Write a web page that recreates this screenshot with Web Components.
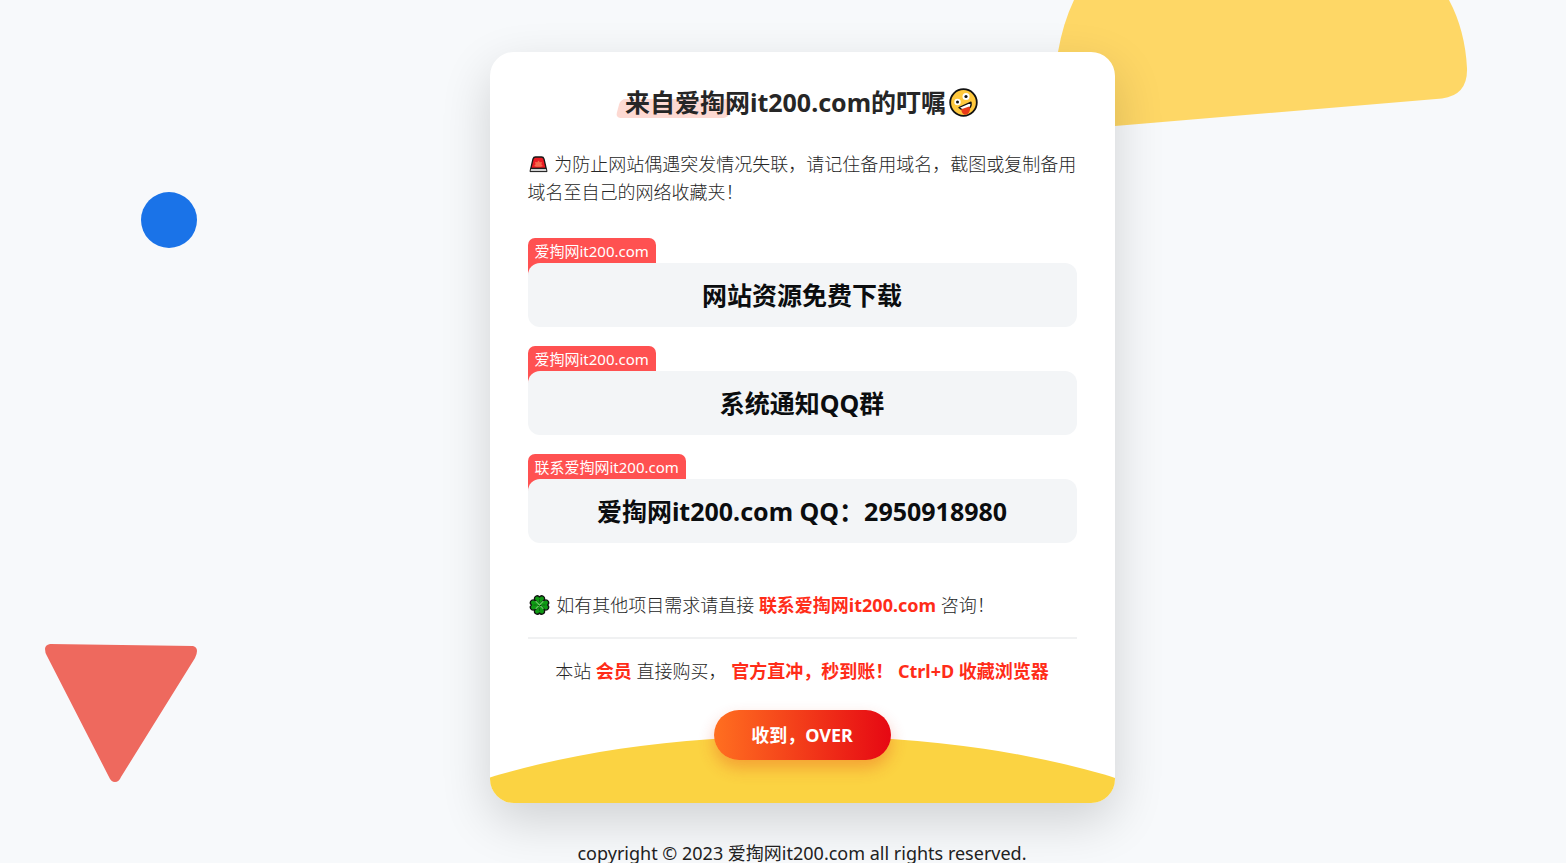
<!DOCTYPE html>
<html lang="zh-CN">
<head>
<meta charset="utf-8">
<meta name="viewport" content="width=device-width, initial-scale=1">
<title>爱掏网it200.com</title>
<style>
  body {
    margin: 0;
    background: #f7f9fb;
    color: #262626;
    font-family: "Noto Sans", "Noto Sans CJK SC", sans-serif;
    font-size: 18px;
    line-height: 28px;
  }
</style>
</head>
<body>
<notice-page>
  <notice-card>
    <notice-title slot="title">来自爱掏网it200.com的叮嘱</notice-title>
    <notice-text slot="intro" icon="alarm">为防止网站偶遇突发情况失联，请记住备用域名，截图或复制备用域名至自己的网络收藏夹！</notice-text>
    <link-item label="爱掏网it200.com">网站资源免费下载</link-item>
    <link-item label="爱掏网it200.com">系统通知QQ群</link-item>
    <link-item label="联系爱掏网it200.com">爱掏网it200.com QQ：2950918980</link-item>
    <notice-text slot="contact" icon="clover">如有其他项目需求请直接 <hot-link>联系爱掏网it200.com</hot-link> 咨询！</notice-text>
    <notice-text slot="member" centered>本站 <hot-link>会员</hot-link> 直接购买， <hot-link>官方直冲，秒到账！</hot-link> <hot-link>Ctrl+D 收藏浏览器</hot-link></notice-text>
    <confirm-button slot="action">收到，OVER</confirm-button>
  </notice-card>
  <span slot="footer">copyright © 2023 爱掏网it200.com all rights reserved.</span>
</notice-page>

<script>
const icons = {
  alarm: `
    <svg width="22" height="20" viewBox="0 0 22 20" aria-hidden="true">
      <path d="M5 4Q5.6 2 7.5 2H13.500Q15.400 2 16 4L18.2 13.500H2.800Z" fill="#ec1c24" stroke="#161616" stroke-width="1.3"/>
      <path d="M10.500 5.500l1.300 1.700 2.200-.2-.6 2.200 1.400 1.800-2 .8H8.200l-2-.8 1.400-1.800L7 7l2.200.2Z" fill="#f4694c"/>
      <path d="M2.600 13.400H18.400L19 16.600H2Z" fill="#d2d2d2" stroke="#161616" stroke-width="1"/>
    </svg>`,
  clover: `
    <svg width="24" height="22" viewBox="0 0 24 22" aria-hidden="true">
      <g fill="#0f9a14" stroke="#111" stroke-width="1.3" stroke-linejoin="round">
        <path id="leaf" d="M11.500 11L7 7Q5.500 3.500 7.800 2.200Q10 1 11.500 3Q13 1 15.200 2.200Q17.500 3.500 16 7Z"/>
        <use href="#leaf" transform="rotate(90 11.500 11)"/>
        <use href="#leaf" transform="rotate(180 11.500 11)"/>
        <use href="#leaf" transform="rotate(270 11.500 11)"/>
      </g>
      <path d="M8 7.500L15 14.500M15 7.500L8 14.500" stroke="#5fd05a" stroke-width="1.400" stroke-linecap="round"/>
      <path d="M11.500 5V8M11.500 14V17M5.500 11H8.500M14.500 11H17.500" stroke="#0a6b0e" stroke-width="1"/>
    </svg>`,
  zany: `
    <svg width="31" height="31" viewBox="0 0 31 31" aria-hidden="true">
      <circle cx="15.5" cy="15.5" r="13.3" fill="#ffc83d" stroke="#111" stroke-width="1.8"/>
      <circle cx="9.500" cy="15" r="3.2" fill="#fff"/>
      <circle cx="18" cy="9.5" r="3.5" fill="#fff"/>
      <circle cx="9.500" cy="15" r="1.500" fill="#111"/>
      <circle cx="18" cy="9.5" r="1.600" fill="#111"/>
      <path d="M11 20.500L23 15.200Q24 20.5 19.5 22.5Q14.5 24.3 11 20.500Z" fill="#fff" stroke="#111" stroke-width="1.3" stroke-linejoin="round"/>
      <path d="M13.2 22.300L21.2 19.500Q23 22 21 25.5Q19.6 27.8 17 27.7Q14 27.5 13.2 22.300Z" fill="#e93a18"/>
    </svg>`
};

class NoticePage extends HTMLElement {
  constructor() {
    super();
    this.attachShadow({ mode: 'open' });
    this.shadowRoot.innerHTML = `
      <style>
        :host {
          display: block;
          position: relative;
          min-height: 100vh;
          overflow: hidden;
        }

        .shape {
          position: absolute;
        }

        .dome {
          top: 0;
          right: 98px;
        }

        .dot {
          top: 192px;
          left: 9%;
          width: 56px;
          height: 56px;
          border-radius: 50%;
          background: #1a73e8;
        }

        .triangle {
          top: 643px;
          left: 44px;
        }

        main {
          position: relative;
          display: flex;
          flex-direction: column;
          align-items: center;
          padding: 52px 0 0 38px;
        }

        footer {
          margin-top: 36px;
          color: #222;
          white-space: nowrap;
        }
      </style>

      <svg class="shape dome" width="412" height="132" viewBox="0 0 412 132" aria-hidden="true">
        <path d="M18 0Q7 23 2 52L0 131L59 126L386 98.500Q412 95 411 68Q409 30 393 0Z" fill="#fed766"/>
      </svg>
      <div class="shape dot"></div>
      <svg class="shape triangle" width="154" height="140" viewBox="0 0 154 140" aria-hidden="true">
        <path d="M6 1L149 3Q153 4 153 8Q153 11 151 15L77 134Q75 139 71 139Q67 139 65 134L3 13Q1 10 1 6Q1 2 6 1Z" fill="#ee695e"/>
      </svg>
      <main>
        <slot></slot>
        <footer><slot name="footer"></slot></footer>
      </main>
    `;
  }
}

class NoticeCard extends HTMLElement {
  constructor() {
    super();
    this.attachShadow({ mode: 'open' });
    this.shadowRoot.innerHTML = `
      <style>
        :host {
          display: block;
          position: relative;
          box-sizing: border-box;
          width: 100%;
          max-width: 625px;
          padding: 32px 38px 43px;
          border-radius: 24px;
          background: #fff;
          box-shadow: 0 18px 50px rgba(0, 0, 0, 0.16);
        }

        #hill {
          position: absolute;
          inset: 0;
          overflow: hidden;
          border-radius: 24px;
        }

        #hill::before {
          content: "";
          position: absolute;
          top: calc(100% - 67px);
          left: -26%;
          width: 152%;
          height: 338px;
          border-radius: 50%;
          background: #fbd342;
        }

        #content {
          position: relative;
          display: flex;
          flex-direction: column;
        }

        #items {
          display: flex;
          flex-direction: column;
          gap: 19px;
          margin: 32px 0 48px;
        }

        hr {
          width: 100%;
          height: 2px;
          margin: 18px 0;
          border: 0;
          background: #f0f1f2;
        }
      </style>

      <div id="hill"></div>
      <div id="content">
        <slot name="title"></slot>
        <slot name="intro"></slot>
        <div id="items"><slot></slot></div>
        <slot name="contact"></slot>
        <hr>
        <slot name="member"></slot>
        <slot name="action"></slot>
      </div>
    `;
  }
}

class NoticeTitle extends HTMLElement {
  constructor() {
    super();
    this.attachShadow({ mode: 'open' });
    this.shadowRoot.innerHTML = `
      <style>
        :host {
          display: flex;
          justify-content: center;
          margin-bottom: 30px;
        }

        h1 {
          position: relative;
          display: flex;
          align-items: center;
          gap: 2px;
          margin: 0;
          font-size: 25px;
          line-height: 36px;
          font-weight: 700;
          white-space: nowrap;
        }

        /* marker stroke behind the first words */
        h1::before {
          content: "";
          position: absolute;
          left: -7px;
          bottom: 2px;
          width: 32%;
          height: 19px;
          border-radius: 5px;
          background: #fdd9d2;
          transform: skewX(-15deg);
        }

        span, svg {
          position: relative;
        }
      </style>

      <h1><span><slot></slot></span>${icons.zany}</h1>
    `;
  }
}

class NoticeText extends HTMLElement {
  constructor() {
    super();
    this.attachShadow({ mode: 'open' });
    const icon = icons[this.getAttribute('icon')] || '';
    this.shadowRoot.innerHTML = `
      <style>
        :host {
          display: block;
          font-weight: 300;
        }

        :host([centered]) {
          text-align: center;
        }

        p {
          margin: 0;
        }

        svg {
          vertical-align: -4px;
        }
      </style>

      <p>${icon} <slot></slot></p>
    `;
  }
}

class LinkItem extends HTMLElement {
  constructor() {
    super();
    this.attachShadow({ mode: 'open' });
    this.shadowRoot.innerHTML = `
      <style>
        :host {
          display: flex;
          flex-direction: column;
          align-items: flex-start;
        }

        #tag {
          box-sizing: border-box;
          height: 40px;
          margin-bottom: -15px;
          padding: 0 7px;
          border-radius: 7px 7px 0 0;
          background: #ff5151;
          color: #fff;
          font-size: 15px;
          line-height: 27px;
        }

        a {
          position: relative;
          box-sizing: border-box;
          width: 100%;
          padding: 14px;
          border-radius: 12px;
          background: #f3f5f7;
          color: #0b0d0f;
          font-size: 25px;
          line-height: 36px;
          font-weight: 700;
          text-align: center;
          text-decoration: none;
        }
      </style>

      <span id="tag"></span>
      <a href="#"><slot></slot></a>
    `;
    this.shadowRoot.querySelector('#tag').textContent = this.getAttribute('label');
  }
}

class HotLink extends HTMLElement {
  constructor() {
    super();
    this.attachShadow({ mode: 'open' });
    this.shadowRoot.innerHTML = `
      <style>
        :host {
          display: inline;
        }

        a {
          color: #ff2c18;
          font-weight: 700;
          text-decoration: none;
        }
      </style>

      <a href="#"><slot></slot></a>
    `;
  }
}

class ConfirmButton extends HTMLElement {
  constructor() {
    super();
    this.attachShadow({ mode: 'open' });
    this.shadowRoot.innerHTML = `
      <style>
        :host {
          display: flex;
          justify-content: center;
          margin-top: 25px;
        }

        button {
          min-width: 177px;
          padding: 11px 36px;
          border: 0;
          border-radius: 25px;
          background: linear-gradient(90deg, #ff6f20, #e60813);
          box-shadow: 0 8px 16px rgba(230, 50, 20, 0.3);
          color: #fff;
          font-family: inherit;
          font-size: 18px;
          line-height: 28px;
          font-weight: 700;
          cursor: pointer;
        }
      </style>

      <button type="button"><slot></slot></button>
    `;
  }
}

customElements.define('notice-page', NoticePage);
customElements.define('notice-card', NoticeCard);
customElements.define('notice-title', NoticeTitle);
customElements.define('notice-text', NoticeText);
customElements.define('link-item', LinkItem);
customElements.define('hot-link', HotLink);
customElements.define('confirm-button', ConfirmButton);
</script>
</body>
</html>
